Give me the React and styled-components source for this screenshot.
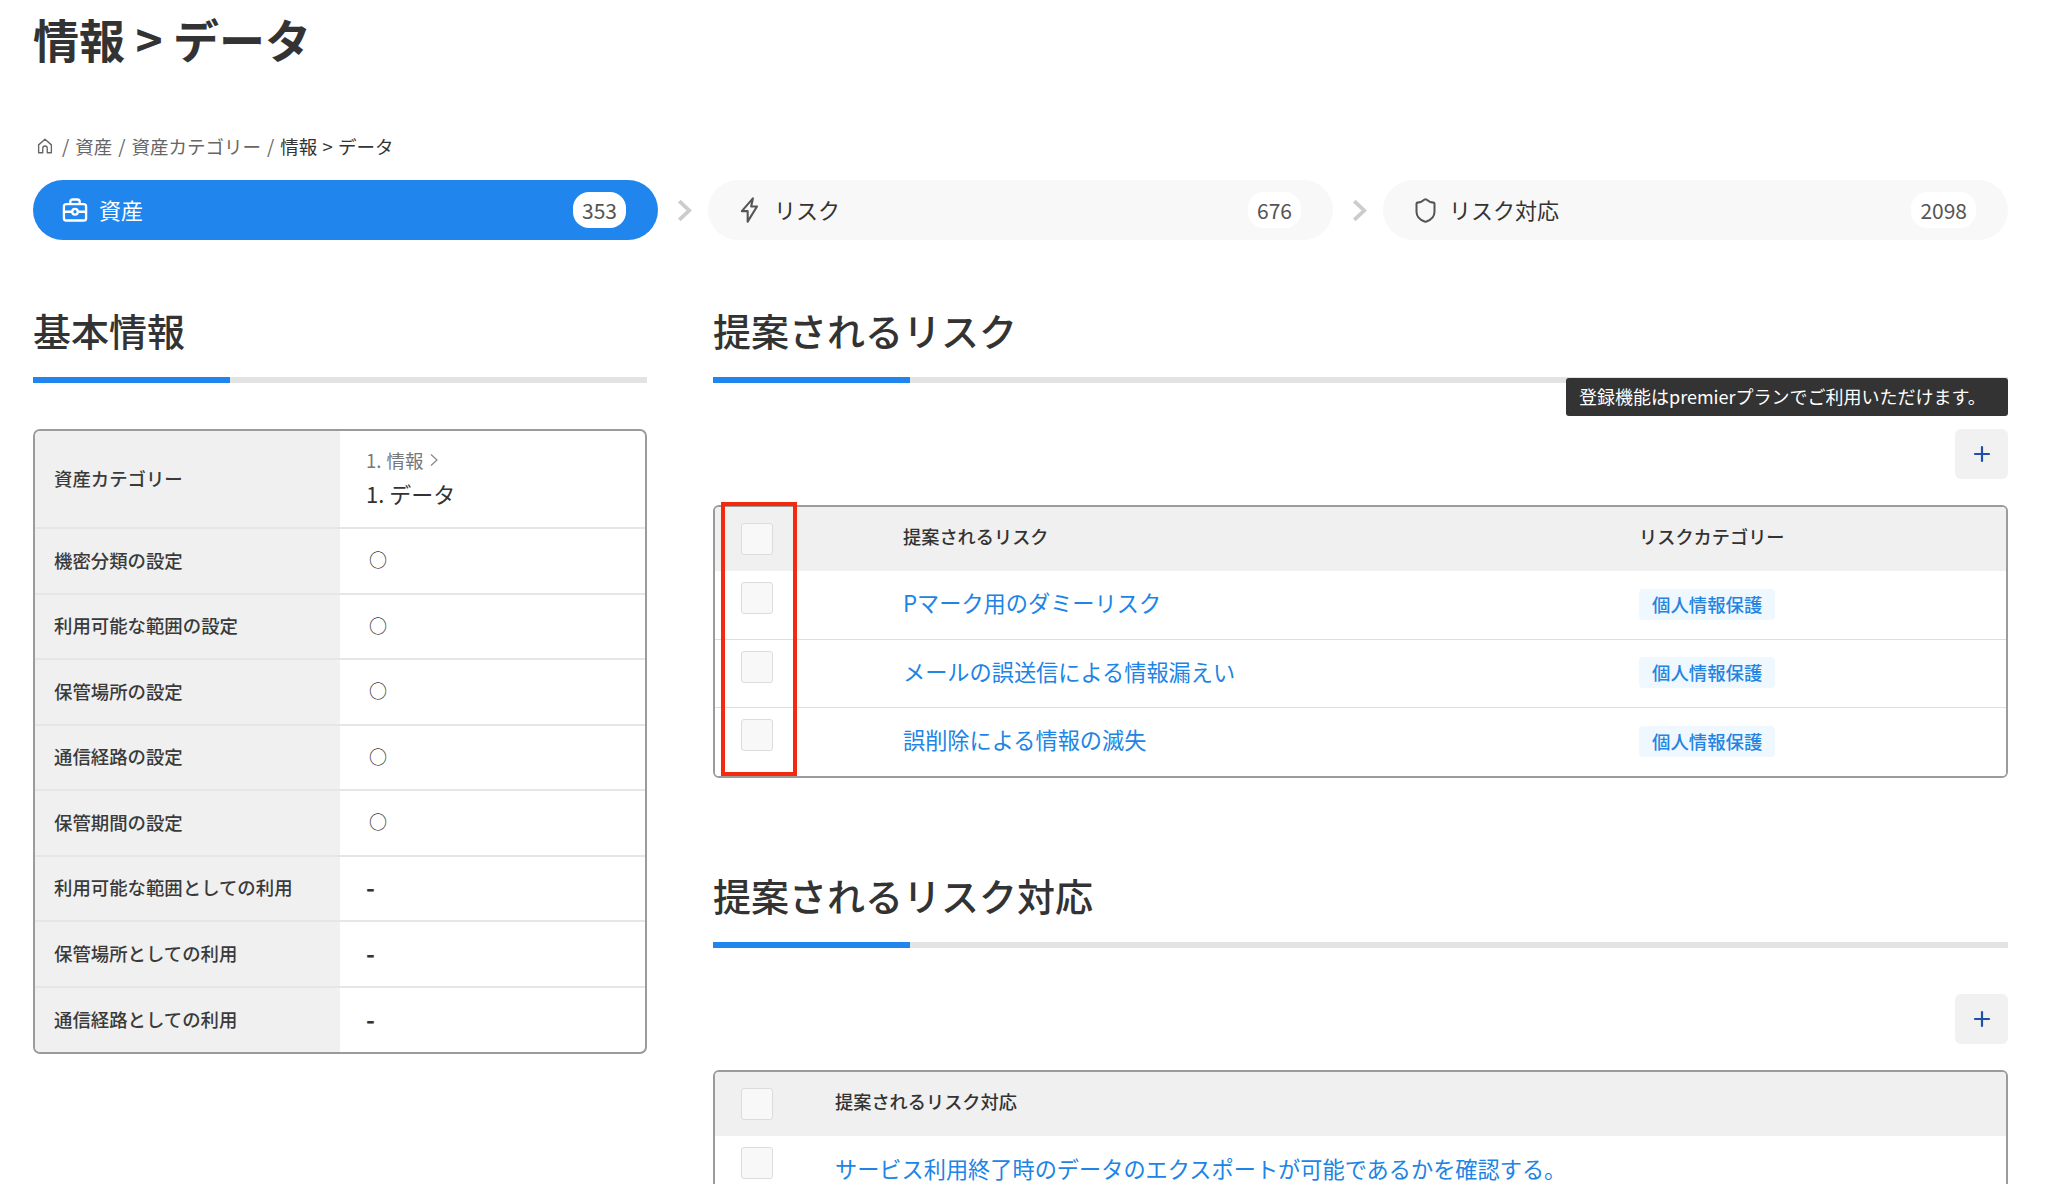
import React from "react";
import styled, { createGlobalStyle } from "styled-components";
import { Plus, Shield } from "lucide-react";

const Global = createGlobalStyle`
  html, body { margin: 0; padding: 0; background: #fff; }
  body {
    font-family: "Noto Sans CJK JP", "Noto Sans", "Liberation Sans", sans-serif;
    color: #333;
    overflow: hidden;
  }
  * { box-sizing: border-box; }
`;

const Page = styled.div`
  width: 2048px;
  height: 1184px;
  overflow: hidden;
  padding: 0 40px 0 33px;
`;
const PageTitle = styled.h1`
  margin: 0;
  height: 80px;
  line-height: 76px;
  font-size: 46px;
  font-weight: 700;
  color: #333;
`;
const Breadcrumb = styled.nav`
  margin-top: 54px;
  height: 24px;
  display: flex;
  align-items: center;
  gap: 6px;
  font-size: 18.5px;
  line-height: 24px;
  color: #666;
`;
const HomeLink = styled.svg`
  width: 18px;
  height: 18px;
  margin: 0 2px 0 3px;
  fill: none;
  stroke: #666;
  stroke-width: 1.8;
  stroke-linejoin: round;
`;
const Current = styled.span`
  color: #333;
  word-spacing: 1px;
`;
const Tabs = styled.div`
  margin-top: 22px;
  display: grid;
  grid-template-columns: 1fr 50px 1fr 50px 1fr;
  align-items: center;
`;
const Tab = styled.div`
  height: 60px;
  border-radius: 30px;
  padding: 0 32px 0 28px;
  display: flex;
  align-items: center;
  gap: 10px;
  background: ${(p) => (p.$active ? "#2086ee" : "#f8f8f8")};
  color: ${(p) => (p.$active ? "#fff" : "#333")};
`;
const TabIcon = styled.span`
  width: 28px;
  height: 28px;
  display: flex;
  align-items: center;
  justify-content: center;
  color: ${(p) => (p.$active ? "#fff" : "#555")};
`;
const TabLabel = styled.span`
  flex: 1;
  font-size: 22px;
  font-weight: 400;
  line-height: 28px;
  padding-bottom: 3px;
`;
const Count = styled.span`
  height: 36px;
  padding: 0 9px;
  border-radius: 16px;
  background: #fff;
  color: #555;
  font-size: 21px;
  line-height: 36px;
`;
const Arrow = styled.svg`
  justify-self: center;
  width: 15px;
  height: 23px;
  margin-left: 2px;
  fill: none;
  stroke: #ccc;
  stroke-width: 3.6;
`;
const Columns = styled.div`
  margin-top: 62px;
  display: grid;
  grid-template-columns: 614px 1295px;
  column-gap: 66px;
  align-items: start;
`;
const Section = styled.section`
  position: relative;
  & + & {
    margin-top: 89px;
  }
`;
const SectionTitle = styled.h2`
  margin: 0;
  height: 60px;
  line-height: 56px;
  font-size: 38px;
  font-weight: 500;
  color: #333;
`;
const Rule = styled.div`
  margin-top: 15px;
  height: 6px;
  background: #e3e3e3;
  &::before {
    content: "";
    display: block;
    width: 197px;
    height: 100%;
    background: #2086ee;
  }
`;
const InfoTable = styled.div`
  margin-top: 46px;
  border: 2px solid #9b9b9b;
  border-radius: 7px;
  overflow: hidden;
`;
const InfoRow = styled.div`
  display: grid;
  grid-template-columns: 305px 1fr;
  height: ${(p) => (p.$tall ? "98px" : "65.5px")};
  border-bottom: 2px solid #e6e6e6;
  &:last-child {
    height: 64px;
    border-bottom: 0;
  }
`;
const InfoLabel = styled.div`
  background: #f0f0f0;
  padding: 0 0 2px 19px;
  display: flex;
  align-items: center;
  font-size: 18.4px;
  font-weight: 500;
  color: #3a3a3a;
`;
const InfoValue = styled.div`
  display: flex;
  flex-direction: column;
  justify-content: center;
  padding: 0 0 3px 26px;
  color: #333;
`;
const CircleMark = styled(InfoValue)`
  padding-left: 29px;
  font-size: 18px;
`;
const DashMark = styled(InfoValue)`
  font-size: 24px;
  font-weight: 700;
`;
const ParentPath = styled.div`
  display: flex;
  align-items: center;
  gap: 6px;
  font-size: 18.5px;
  word-spacing: 1px;
  line-height: 30px;
  color: #777;
`;
const LeafPath = styled.div`
  font-size: 22px;
  line-height: 36px;
  color: #333;
`;
const SmallChevron = styled.svg`
  width: 8px;
  height: 14px;
  fill: none;
  stroke: #888;
  stroke-width: 1.2;
`;
const Tooltip = styled.div`
  position: absolute;
  right: 0;
  top: 76px;
  height: 38px;
  width: 442px;
  padding-left: 13px;
  border-radius: 3px;
  background: #333;
  color: #fff;
  font-size: 18px;
  line-height: 36px;
  white-space: nowrap;
`;
const Toolbar = styled.div`
  margin-top: 46px;
  display: flex;
  justify-content: flex-end;
`;
const AddButton = styled.button`
  width: 53px;
  height: 50px;
  padding: 0;
  border: 0;
  border-radius: 6px;
  background: #f1f1f1;
  color: #1f4fa8;
  display: flex;
  align-items: center;
  justify-content: center;
`;
const ListTable = styled.div`
  margin-top: 26px;
  border: 2px solid #9b9b9b;
  border-radius: 6px;
  overflow: hidden;
`;
const ListRow = styled.div`
  display: grid;
  grid-template-columns: ${(p) => p.$cols};
  height: ${(p) => (p.$head ? "64px" : "68px")};
  background: ${(p) => (p.$head ? "#f0f0f0" : "#fff")};
  align-items: ${(p) => (p.$head ? "center" : "start")};
  & + & + & {
    border-top: 1px solid #dedede;
  }
  &:last-child {
    height: ${(p) => (p.$head ? "64px" : "69px")};
  }
`;
const CheckCell = styled.div`
  padding: ${(p) => (p.$head ? "0" : "11px")} 0 0 26px;
`;
const CheckBox = styled.span`
  display: block;
  width: 32px;
  height: 32px;
  border: 1.5px solid #dcdcdc;
  border-radius: 3px;
  background: #f8f8f8;
`;
const HeadCell = styled.div`
  font-size: 18.2px;
  font-weight: 500;
  color: #333;
  padding-bottom: 6px;
`;
const LinkCell = styled.a`
  align-self: center;
  font-size: 22.2px;
  line-height: 26px;
  padding-bottom: 6px;
  color: #2084e4;
  text-decoration: none;
  white-space: nowrap;
`;
const TagCell = styled.div`
  align-self: center;
  padding-bottom: 2px;
`;
const Tag = styled.span`
  display: block;
  width: fit-content;
  height: 31px;
  line-height: 30px;
  padding: 0 13px;
  border-radius: 4px;
  background: #f0f8ff;
  color: #2584e0;
  font-size: 18.4px;
  font-weight: 500;
`;
const Highlight = styled.div`
  position: absolute;
  left: 8px;
  top: 200px;
  width: 76px;
  height: 274px;
  border: 4px solid #f42a10;
  pointer-events: none;
  z-index: 2;
`;

const settingRows = ["機密分類の設定", "利用可能な範囲の設定", "保管場所の設定", "通信経路の設定", "保管期間の設定"];
const usageRows = ["利用可能な範囲としての利用", "保管場所としての利用", "通信経路としての利用"];
const riskRows = ["Pマーク用のダミーリスク", "メールの誤送信による情報漏えい", "誤削除による情報の滅失"];
const riskCols = "188px 736px 1fr";
const actionCols = "120px 1fr";

const BriefcaseIcon = () => (
  <svg width="28" height="28" viewBox="0 0 24 24" fill="none" stroke="currentColor" strokeWidth="2" strokeLinejoin="round">
    <rect x="2.5" y="7" width="19" height="14" rx="2" />
    <path d="M8 7V5a2 2 0 0 1 2-2h4a2 2 0 0 1 2 2v2M2.5 13.5h6.5M15 13.5h6.5" />
    <circle cx="12" cy="13.5" r="2.4" />
  </svg>
);
const BoltIcon = () => (
  <svg width="28" height="28" viewBox="0 0 24 24" fill="none" stroke="currentColor" strokeWidth="1.8" strokeLinejoin="round">
    <path d="M14.5 2 5 13h5v9l8-13h-5z" />
  </svg>
);
const TabArrow = () => (
  <Arrow viewBox="0 0 14 22">
    <path d="M2 2l9.5 9L2 20" />
  </Arrow>
);

export default function App() {
  return (
    <Page>
      <Global />
      <PageTitle>情報 &gt; データ</PageTitle>
      <Breadcrumb>
        <HomeLink viewBox="0 0 24 24">
          <path d="M3.5 10.5 12 3l8.5 7.5V21H15v-6a3 3 0 0 0-6 0v6H3.5z" />
        </HomeLink>
        <span>/</span>
        <span>資産</span>
        <span>/</span>
        <span>資産カテゴリー</span>
        <span>/</span>
        <Current>情報 &gt; データ</Current>
      </Breadcrumb>
      <Tabs>
        <Tab $active>
          <TabIcon $active><BriefcaseIcon /></TabIcon>
          <TabLabel>資産</TabLabel>
          <Count>353</Count>
        </Tab>
        <TabArrow />
        <Tab>
          <TabIcon><BoltIcon /></TabIcon>
          <TabLabel>リスク</TabLabel>
          <Count>676</Count>
        </Tab>
        <TabArrow />
        <Tab>
          <TabIcon><Shield size={27} strokeWidth={1.8} /></TabIcon>
          <TabLabel>リスク対応</TabLabel>
          <Count>2098</Count>
        </Tab>
      </Tabs>
      <Columns>
        <Section>
          <SectionTitle>基本情報</SectionTitle>
          <Rule />
          <InfoTable>
            <InfoRow $tall>
              <InfoLabel>資産カテゴリー</InfoLabel>
              <InfoValue>
                <ParentPath>
                  1. 情報
                  <SmallChevron viewBox="0 0 8 14"><path d="M1 1.5 7 7l-6 5.5" /></SmallChevron>
                </ParentPath>
                <LeafPath>1. データ</LeafPath>
              </InfoValue>
            </InfoRow>
            {settingRows.map((label) => (
              <InfoRow key={label}>
                <InfoLabel>{label}</InfoLabel>
                <CircleMark>○</CircleMark>
              </InfoRow>
            ))}
            {usageRows.map((label) => (
              <InfoRow key={label}>
                <InfoLabel>{label}</InfoLabel>
                <DashMark>-</DashMark>
              </InfoRow>
            ))}
          </InfoTable>
        </Section>
        <div>
          <Section>
            <SectionTitle>提案されるリスク</SectionTitle>
            <Rule />
            <Tooltip>登録機能はpremierプランでご利用いただけます。</Tooltip>
            <Toolbar>
              <AddButton aria-label="追加"><Plus size={24} strokeWidth={2.2} /></AddButton>
            </Toolbar>
            <ListTable>
              <ListRow $head $cols={riskCols}>
                <CheckCell $head><CheckBox /></CheckCell>
                <HeadCell>提案されるリスク</HeadCell>
                <HeadCell>リスクカテゴリー</HeadCell>
              </ListRow>
              {riskRows.map((text) => (
                <ListRow key={text} $cols={riskCols}>
                  <CheckCell><CheckBox /></CheckCell>
                  <LinkCell>{text}</LinkCell>
                  <TagCell><Tag>個人情報保護</Tag></TagCell>
                </ListRow>
              ))}
            </ListTable>
            <Highlight />
          </Section>
          <Section>
            <SectionTitle>提案されるリスク対応</SectionTitle>
            <Rule />
            <Toolbar>
              <AddButton aria-label="追加"><Plus size={24} strokeWidth={2.2} /></AddButton>
            </Toolbar>
            <ListTable>
              <ListRow $head $cols={actionCols}>
                <CheckCell $head><CheckBox /></CheckCell>
                <HeadCell>提案されるリスク対応</HeadCell>
              </ListRow>
              <ListRow $cols={actionCols}>
                <CheckCell><CheckBox /></CheckCell>
                <LinkCell>サービス利用終了時のデータのエクスポートが可能であるかを確認する。</LinkCell>
              </ListRow>
            </ListTable>
          </Section>
        </div>
      </Columns>
    </Page>
  );
}
